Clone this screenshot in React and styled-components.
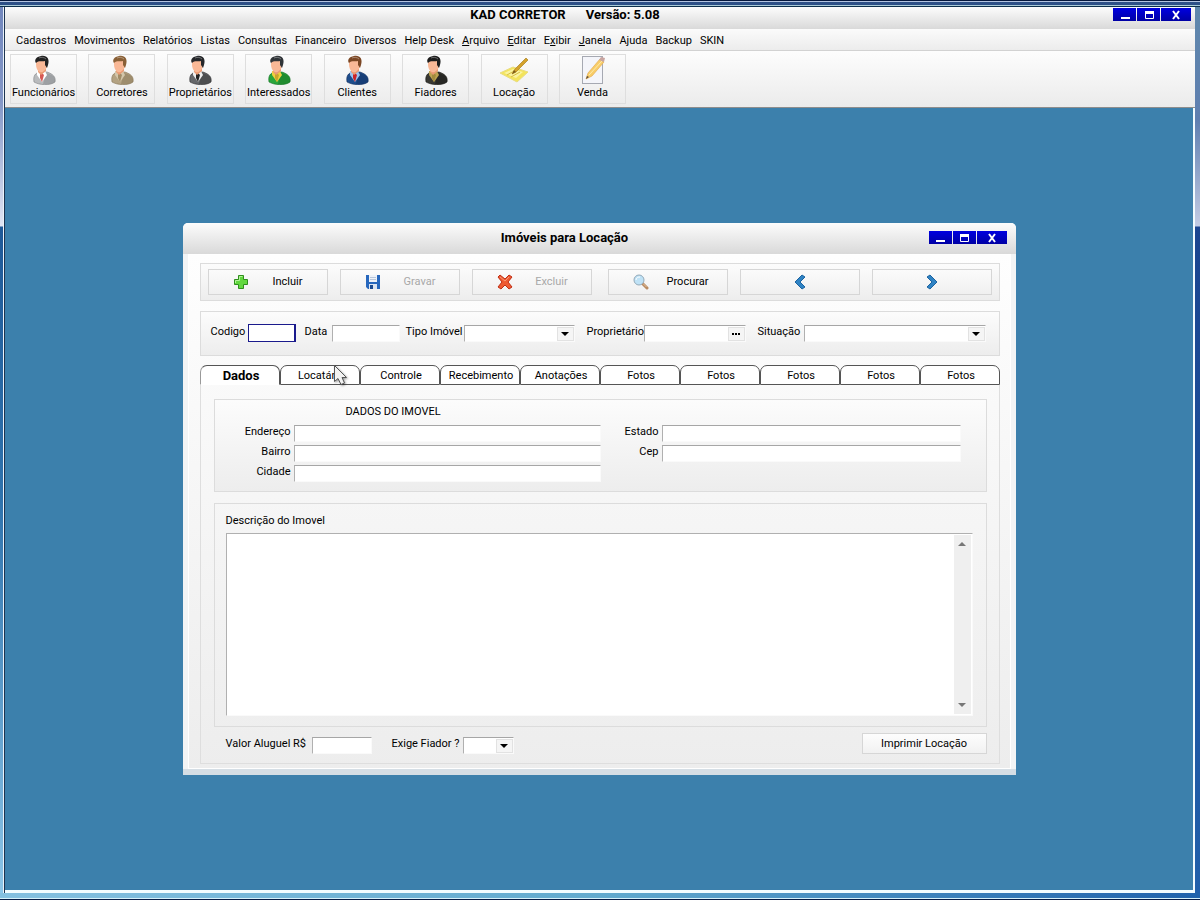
import React, { useState } from 'react'
import styled, { createGlobalStyle, css } from 'styled-components'

const menuItems = [
    { label: 'Cadastros' },
    { label: 'Movimentos' },
    { label: 'Relatórios' },
    { label: 'Listas' },
    { label: 'Consultas' },
    { label: 'Financeiro' },
    { label: 'Diversos' },
    { label: 'Help Desk' },
    { label: 'Arquivo', hot: 0 },
    { label: 'Editar', hot: 0 },
    { label: 'Exibir', hot: 1 },
    { label: 'Janela', hot: 0 },
    { label: 'Ajuda' },
    { label: 'Backup' },
    { label: 'SKIN' },
]

const tabs = ['Dados', 'Locatário', 'Controle', 'Recebimento', 'Anotações', 'Fotos', 'Fotos', 'Fotos', 'Fotos', 'Fotos']

const Person = ({ hair, coat, shade, shirt, tie }) => (
    <svg width="30" height="30" viewBox="0 0 30 30" aria-hidden="true">
        <path d="M5 27 C4 21 6 18 11 17 L18 17 C24 19 27 22 26 27 C21 31 10 30 5 27Z" fill={coat} stroke={shade} strokeWidth="0.6" />
        <path d="M17 18 C23 19 27 22 26 27 C22 30 18 29 14 29Z" fill={shade} opacity="0.45" />
        <path d="M8 16 L16 16 L18 20 L13 27 L8 20Z" fill={shirt} />
        <path d="M11 19 L13 18 L15 20 L13 27 L11 23Z" fill={tie} />
        <path d="M9 12 L17 12 L17 16 L12 20 L9 17Z" fill="#e99a72" />
        <path d="M7 6 C8 3 17 3 18 7 L18 12 C16 16 13 18 11 17 C8 16 7 12 7 9Z" fill="#f9b896" />
        <path d="M7 8 C5 5 7 2 12 1 C18 0 21 4 19 10 L18 13 L16 10 L16 6 C13 7 10 5 7 8Z" fill={hair} />
        <path d="M10 3 C12 2 15 2 17 4" stroke="#fff" fill="none" opacity="0.35" />
    </svg>
)

const NoteIcon = () => (
    <svg width="32" height="30" viewBox="0 0 32 30" aria-hidden="true">
        <path d="M2 18 L15 12 L30 17 L19 27Z" fill="#f3e45c" stroke="#e9dc80" />
        <path d="M6 18 L15 14 L25 17 L18 23Z" fill="#faf3a0" />
        <path d="M9 20 L16 16 M13 22 L22 17" stroke="#d6bf45" />
        <path d="M14 19 L17 14 L28 3 L30 5 L18 17Z" fill="#d5a22b" stroke="#a98324" strokeWidth="0.7" />
        <path d="M14 19 L16 15 L18 17Z" fill="#7b5c17" />
    </svg>
)

const PencilIcon = () => (
    <svg width="30" height="30" viewBox="0 0 30 30" aria-hidden="true">
        <rect x="5.5" y="1.5" width="20" height="27" fill="#f4f5fa" stroke="#a6a9b2" />
        <path d="M9 24 L11 18 L23 4 L27 7 L15 21Z" fill="#f8cd68" stroke="#e5ad55" strokeWidth="0.7" />
        <path d="M12 20 L25 6" stroke="#fdeab0" />
        <path d="M22 5 L24 2 L28 3 L27 7Z" fill="#c9a5a0" />
        <path d="M9 24 L10 21 L12 22Z" fill="#55483a" />
    </svg>
)

const shortcuts = [
    { label: 'Funcionários', icon: <Person hair="#222" coat="#b9bbbd" shade="#7d8083" shirt="#fff" tie="#d65a55" /> },
    { label: 'Corretores', icon: <Person hair="#8a6036" coat="#b3a282" shade="#857455" shirt="#d3c6aa" tie="#a18c67" /> },
    { label: 'Proprietários', icon: <Person hair="#25272a" coat="#66686b" shade="#2d2e31" shirt="#eee" tie="#222" /> },
    { label: 'Interessados', icon: <Person hair="#303438" coat="#2aa63b" shade="#136d22" shirt="#f0cf3d" tie="#c9a52a" /> },
    { label: 'Clientes', icon: <Person hair="#7b4724" coat="#1e4d8c" shade="#102d5c" shirt="#9cc4ee" tie="#c8242a" /> },
    { label: 'Fiadores', icon: <Person hair="#1d1d1d" coat="#383833" shade="#151512" shirt="#bda352" tie="#a28a3d" /> },
    { label: 'Locação', icon: <NoteIcon /> },
    { label: 'Venda', icon: <PencilIcon /> },
]

const PlusIcon = () => (
    <svg width="16" height="16" viewBox="0 0 16 16" aria-hidden="true">
        <path d="M5.5 1.5 H10.5 V5.5 H14.5 V10.5 H10.5 V14.5 H5.5 V10.5 H1.5 V5.5 H5.5Z" fill="#62d83f" stroke="#2f8f1d" />
        <path d="M9.5 2.5 H6.5 V6.5 H2.5 V9" stroke="#b3f39a" fill="none" />
    </svg>
)

const DiskIcon = () => (
    <svg width="16" height="16" viewBox="0 0 16 16" aria-hidden="true">
        <path d="M1 1 H15 V15 H3 L1 13Z" fill="#2767bd" />
        <rect x="4" y="1" width="8" height="7" fill="#eef2f8" />
        <path d="M5 3.5 H11 M5 5.5 H11" stroke="#b8c6da" />
        <rect x="4" y="10" width="8" height="5" fill="#dbe4f1" />
        <rect x="5" y="11" width="3" height="4" fill="#1b4a90" />
    </svg>
)

const CrossIcon = () => (
    <svg width="16" height="16" viewBox="0 0 16 16" aria-hidden="true">
        <path d="M3 1 L8 5 L12 1 L15 3 L11 8 L15 13 L12 15 L8 11 L4 15 L1 13 L5 8 L1 3Z" fill="#ee5a32" stroke="#bf2e14" />
        <path d="M3 3 L8 7 L12 3" stroke="#f89a77" fill="none" />
    </svg>
)

const SearchIcon = () => (
    <svg width="16" height="16" viewBox="0 0 16 16" aria-hidden="true">
        <path d="M9 9 L14 14" stroke="#b98b62" strokeWidth="3" strokeLinecap="round" />
        <path d="M10 9.5 L13.5 13" stroke="#e3c29f" />
        <circle cx="6" cy="6" r="5" fill="#bfe2f6" stroke="#93a9b8" />
        <path d="M3 6 C3 4 5 3 7 3" stroke="#fff" fill="none" />
    </svg>
)

const Chevron = ({ right }) => (
    <svg width="16" height="16" viewBox="0 0 16 16" aria-hidden="true">
        <path
            d={right ? 'M3 3 L6 1 L13 8 L6 15 L3 13 L8 8Z' : 'M13 3 L10 1 L3 8 L10 15 L13 13 L8 8Z'}
            fill="#2f83c4"
            stroke="#1c63a0"
        />
    </svg>
)

const Arrow = ({ up, color = '#000' }) => (
    <svg width="8" height="4" viewBox="0 0 8 4" aria-hidden="true">
        <path d={up ? 'M4 0 L8 4 H0Z' : 'M0 0 H8 L4 4Z'} fill={color} />
    </svg>
)

const Controls = () => (
    <ControlGroup>
        <ControlButton aria-label="Minimizar">
            <svg width="12" height="11" viewBox="0 0 12 11"><path d="M2 9 H11" stroke="#fff" strokeWidth="2" /></svg>
        </ControlButton>
        <ControlButton aria-label="Maximizar">
            <svg width="12" height="11" viewBox="0 0 12 11">
                <path d="M2.5 2.5 H10.5 V9.5 H2.5Z" stroke="#fff" fill="none" />
                <path d="M2 3 H11 M2 4 H11" stroke="#fff" strokeWidth="2" />
            </svg>
        </ControlButton>
        <ControlButton $wide aria-label="Fechar">
            <svg width="12" height="11" viewBox="0 0 12 11"><path d="M3 2 L9 10 M9 2 L3 10" stroke="#fff" strokeWidth="2" /></svg>
        </ControlButton>
    </ControlGroup>
)

const Combo = ({ id, width }) => (
    <ComboBox $width={width}>
        <ComboSelect id={id} defaultValue="">
            <option value=""></option>
        </ComboSelect>
        <ComboArrow><Arrow /></ComboArrow>
    </ComboBox>
)

const App = () => {
    const [active, setActive] = useState(0)

    const hotLabel = ({ label, hot }) => {
        if (hot === undefined) return label
        return <>{label.slice(0, hot)}<u>{label[hot]}</u>{label.slice(hot + 1)}</>
    }

    return (
        <Frame>
            <GlobalStyle />
            <MainTitleBar>
                <Title>
                    <span>KAD CORRETOR</span>
                    <span>Versão: 5.08</span>
                </Title>
                <Controls />
            </MainTitleBar>
            <MenuBar>
                {menuItems.map((item) => (
                    <MenuButton key={item.label}>{hotLabel(item)}</MenuButton>
                ))}
            </MenuBar>
            <ShortcutBar>
                <ShortcutList>
                    {shortcuts.map((item) => (
                        <Shortcut key={item.label}>
                            {item.icon}
                            <span>{item.label}</span>
                        </Shortcut>
                    ))}
                </ShortcutList>
            </ShortcutBar>
            <Desktop>
                <Window>
                    <WindowTitleBar>
                        <Title>Imóveis para Locação</Title>
                        <Controls />
                    </WindowTitleBar>
                    <WindowBody>
                        <ActionPanel>
                            <ActionGroup>
                                <ActionButton><PlusIcon /><span>Incluir</span></ActionButton>
                                <ActionButton disabled><DiskIcon /><span>Gravar</span></ActionButton>
                                <ActionButton disabled><CrossIcon /><span>Excluir</span></ActionButton>
                            </ActionGroup>
                            <ActionGroup>
                                <ActionButton><SearchIcon /><span>Procurar</span></ActionButton>
                                <ActionButton $single aria-label="Anterior"><Chevron /></ActionButton>
                                <ActionButton $single aria-label="Próximo"><Chevron right /></ActionButton>
                            </ActionGroup>
                        </ActionPanel>

                        <FilterPanel>
                            <Field $label={37}>
                                <Label htmlFor="codigo">Codigo</Label>
                                <FocusedInput id="codigo" />
                            </Field>
                            <Field $label={27}>
                                <Label htmlFor="data">Data</Label>
                                <Input id="data" $width={68} />
                            </Field>
                            <Field $label={58}>
                                <Label htmlFor="tipo">Tipo Imóvel</Label>
                                <Combo id="tipo" width={111} />
                            </Field>
                            <Field $label={57}>
                                <Label htmlFor="proprietario">Proprietário</Label>
                                <Lookup>
                                    <LookupInput id="proprietario" />
                                    <LookupButton aria-label="Localizar proprietário">
                                        <svg width="8" height="2" viewBox="0 0 8 2"><path d="M0 0h2v2H0zM3 0h2v2H3zM6 0h2v2H6z" /></svg>
                                    </LookupButton>
                                </Lookup>
                            </Field>
                            <Field $label={46}>
                                <Label htmlFor="situacao">Situação</Label>
                                <Combo id="situacao" />
                            </Field>
                        </FilterPanel>

                        <TabList role="tablist">
                            {tabs.map((tab, i) => (
                                <Tab key={i} role="tab" aria-selected={active === i} $active={active === i} onClick={() => setActive(i)}>
                                    {tab}
                                </Tab>
                            ))}
                            <Pointer width="14" height="21" viewBox="0 0 14 21" aria-hidden="true">
                                <path d="M0.5 0.5 V16.5 L4 13.5 L7 19.5 L10.5 18 L8 12.5 H12.5Z" fill="#f2f2f2" stroke="#555" />
                            </Pointer>
                        </TabList>
                        <TabPanel role="tabpanel">
                            <AddressGroup>
                                <GroupTitle>DADOS DO IMOVEL</GroupTitle>
                                <AddressGrid>
                                    <Label htmlFor="endereco">Endereço</Label>
                                    <Input id="endereco" />
                                    <Label htmlFor="estado">Estado</Label>
                                    <Input id="estado" />
                                    <Label htmlFor="bairro">Bairro</Label>
                                    <Input id="bairro" />
                                    <Label htmlFor="cep">Cep</Label>
                                    <Input id="cep" />
                                    <Label htmlFor="cidade">Cidade</Label>
                                    <Input id="cidade" />
                                </AddressGrid>
                            </AddressGroup>
                            <DescriptionGroup>
                                <Label htmlFor="descricao">Descrição do Imovel</Label>
                                <Memo>
                                    <MemoText id="descricao" />
                                    <MemoScroll>
                                        <ScrollButton aria-label="Rolar para cima"><Arrow up color="#777" /></ScrollButton>
                                        <ScrollButton aria-label="Rolar para baixo"><Arrow color="#777" /></ScrollButton>
                                    </MemoScroll>
                                </Memo>
                            </DescriptionGroup>
                            <FooterRow>
                                <Field $label={86}>
                                    <Label htmlFor="valor">Valor Aluguel R$</Label>
                                    <Input id="valor" $width={60} />
                                </Field>
                                <Field $label={71}>
                                    <Label htmlFor="fiador">Exige Fiador ?</Label>
                                    <Combo id="fiador" width={51} />
                                </Field>
                                <PrintButton>Imprimir Locação</PrintButton>
                            </FooterRow>
                        </TabPanel>
                    </WindowBody>
                </Window>
            </Desktop>
        </Frame>
    )
}

export default App

const GlobalStyle = createGlobalStyle`
    *{
        box-sizing: border-box;
    }
    body{
        margin: 0;
    }
    body, button, input, select, textarea{
        font-family: Roboto, "Liberation Sans", sans-serif;
        font-size: 11px;
        line-height: 16px;
        color: #000;
    }
    button{
        padding: 0;
        border: 0;
        background: none;
    }
    svg{
        display: block;
        flex-shrink: 0;
    }
`
const Frame = styled.div`
    min-height: 100vh;
    display: flex;
    flex-direction: column;
    padding: 7px 5px 7px 5px;
    background:
        linear-gradient(#06183c 0 1px, #b4c4e0 1px 2px, #2d5087 2px 5px, #a9cbd8 5px 6px, #0d2f4d 6px) top / 100% 7px no-repeat,
        linear-gradient(transparent 0 5px, #d6f1fa 5px 6px, #071c45 6px) bottom / 100% 7px no-repeat,
        linear-gradient(90deg, #84c0e0, #62aace 50%, #1f62ac) bottom / 100% 7px no-repeat,
        linear-gradient(90deg, transparent 0 3px, #eaf2fa 3px 4px, #1c3350 4px) left / 5px 100% no-repeat,
        linear-gradient(#7186bd 0, #8296c6 100px, #dfe4f3 226px, #1f5998 227px, #2f73ad 500px, #8dc6e8) left / 5px 100% no-repeat,
        linear-gradient(#5f88ac 0, #5f7fb0 120px, #c3cce4 226px, #1b4590 227px, #2160ab) right / 5px 100% no-repeat;
`
const titleBar = css`
    display: flex;
    background: linear-gradient(#fcfcfc, #d9d9d9);
`
const MainTitleBar = styled.header`
    ${titleBar}
    height: 22px;
    padding: 1px 4px 0 12px;
`
const Title = styled.h1`
    flex: 1;
    display: flex;
    justify-content: center;
    gap: 20px;
    margin: 0;
    font-size: 13px;
    line-height: 14px;
    font-weight: 700;
`
const ControlGroup = styled.div`
    display: flex;
    gap: 1px;
`
const ControlButton = styled.button`
    width: ${(props) => (props.$wide ? 30 : 23)}px;
    height: 13px;
    display: flex;
    align-items: center;
    justify-content: center;
    background: linear-gradient(#0000e0, #0000a4);
`
const MenuBar = styled.nav`
    display: flex;
    gap: 8px;
    padding: 4px 11px 1px;
    border-bottom: 1px solid #d2d2d2;
    background: linear-gradient(#fbfbfb, #ececec);
`
const MenuButton = styled.button`
    white-space: nowrap;
`
const ShortcutBar = styled.div`
    padding: 3px 5px;
    border-bottom: 1px solid #8d8d8d;
    background: linear-gradient(#fdfdfd, #ebebeb);
`
const ShortcutList = styled.div`
    display: flex;
    justify-content: space-between;
    max-width: 616px;
`
const Shortcut = styled.button`
    width: 67px;
    height: 50px;
    display: flex;
    flex-direction: column;
    align-items: center;
    border: 1px solid #dedede;
    white-space: nowrap;
`
const Desktop = styled.main`
    flex: 1;
    padding: 115px 0 40px;
    border: solid #f2fcff;
    border-width: 0 2px 3px 0;
    background: #3c80ac;
`
const Window = styled.section`
    width: 70%;
    min-width: 833px;
    margin: 0 auto;
    border-radius: 5px 5px 0 0;
    border-bottom: 6px solid #d5dee5;
    background: #f2f4f5;
    overflow: hidden;
`
const WindowTitleBar = styled.header`
    ${titleBar}
    height: 31px;
    padding: 8px 9px 0 18px;
`
const WindowBody = styled.div`
    margin: 0 5px;
    padding: 8px 10px 4px 11px;
    border: 1px solid #fff;
    background: linear-gradient(#fefefe, #ededed);
`
const panel = css`
    border: 1px solid #dcdcdc;
    background: linear-gradient(#fcfcfc, #ededed);
`
const ActionPanel = styled.div`
    ${panel}
    display: flex;
    gap: 16px;
    padding: 5px 7px;
`
const ActionGroup = styled.div`
    flex: 1;
    display: grid;
    grid-template-columns: repeat(3, 1fr);
    gap: 12px;
`
const ActionButton = styled.button`
    height: 26px;
    display: flex;
    align-items: center;
    justify-content: ${(props) => (props.$single ? 'center' : 'flex-start')};
    padding-left: ${(props) => (props.$single ? 0 : 24)}px;
    border: 1px solid #d6d6d6;
    background: linear-gradient(#fbfbfb, #f0f0f0);
    span{
        flex: 1;
    }
    &:disabled{
        color: #a8a8a8;
    }
`
const FilterPanel = styled.div`
    ${panel}
    display: grid;
    grid-template-columns: 94px 101px 181px 171px 1fr;
    margin: 10px 0 9px;
    padding: 12px 13px 13px 10px;
`
const Field = styled.div`
    display: grid;
    grid-template-columns: ${(props) => props.$label}px 1fr;
    align-items: start;
`
const Label = styled.label`
    white-space: nowrap;
`
const sunken = css`
    height: 17px;
    border: 1px solid #b0b0b0;
    border-color: #a6a6a6 #fafafa #fafafa #b0b0b0;
    background: #fff;
`
const Input = styled.input`
    ${sunken}
    width: ${(props) => (props.$width ? props.$width + 'px' : '100%')};
    margin-top: 1px;
    padding: 0 2px;
    outline: none;
`
const FocusedInput = styled(Input)`
    width: 48px;
    height: 18px;
    margin-top: 0;
    border: 1px solid #1a1a8c;
    border-right-width: 2px;
`
const ComboBox = styled.div`
    ${sunken}
    position: relative;
    width: ${(props) => (props.$width ? props.$width + 'px' : '100%')};
    margin-top: 1px;
`
const ComboSelect = styled.select`
    appearance: none;
    display: block;
    width: 100%;
    height: 15px;
    padding: 0 18px 0 2px;
    border: 0;
    background: none;
    outline: none;
`
const ComboArrow = styled.span`
    position: absolute;
    top: 1px;
    right: 0;
    width: 17px;
    height: 14px;
    display: flex;
    align-items: center;
    justify-content: center;
    border: 1px solid #e2e2e2;
    background: #f5f5f5;
    pointer-events: none; // clicks go through to the select
`
const Lookup = styled.div`
    ${sunken}
    display: flex;
    width: 102px;
    margin-top: 1px;
`
const LookupInput = styled.input`
    flex: 1;
    min-width: 0;
    padding: 0 2px;
    border: 0;
    background: none;
    outline: none;
`
const LookupButton = styled.button`
    width: 17px;
    height: 14px;
    margin-top: 1px;
    display: flex;
    align-items: center;
    justify-content: center;
    border: 1px solid #e2e2e2;
    background: #f5f5f5;
`
const TabList = styled.div`
    position: relative;
    display: flex;
`
const Tab = styled.button`
    flex: 1;
    height: 20px;
    padding: 2px 0 0 3px;
    border: 1px solid #555;
    border-left-color: ${(props) => (props.$active ? '#999' : '#555')};
    border-bottom-color: ${(props) => (props.$active ? '#fff' : '#555')};
    border-radius: 7px 7px 0 0;
    background: #fff;
    font-size: ${(props) => (props.$active ? 13 : 11)}px;
    font-weight: ${(props) => (props.$active ? 700 : 400)};
    white-space: nowrap;
`
// mouse pointer resting on the second tab
const Pointer = styled.svg`
    position: absolute;
    left: 134px;
    top: 0;
    filter: drop-shadow(1px 1px 1px rgba(0,0,0,.4));
    pointer-events: none;
`
const TabPanel = styled.div`
    padding: 14px 12px 9px 13px;
    border: 1px solid #dedede;
    border-top: 0;
`
const AddressGroup = styled.div`
    ${panel}
    height: 93px;
    padding: 4px 25px 0 0;
`
const GroupTitle = styled.h2`
    margin: 0 0 4px 131px;
    font-size: 11px;
    line-height: 16px;
    font-weight: 400;
`
const AddressGrid = styled.div`
    display: grid;
    grid-template-columns: 76px 307fr 55px 299fr;
    gap: 0 3px;
    grid-auto-rows: 20px;
    text-align: right;
`
const DescriptionGroup = styled.div`
    margin-top: 11px;
    padding: 9px 13px 10px 11px;
    border: 1px solid #dcdcdc;
`
const Memo = styled.div`
    display: flex;
    height: 183px;
    margin-top: 4px;
    border: 1px solid #b0b0b0;
    border-color: #b0b0b0 #fafafa #fafafa #b0b0b0;
    background: #fff;
`
const MemoText = styled.textarea`
    flex: 1;
    resize: none;
    border: 0;
    background: none;
    outline: none;
`
const MemoScroll = styled.div`
    width: 17px;
    margin: 1px;
    display: flex;
    flex-direction: column;
    justify-content: space-between;
    background: #efefef;
`
const ScrollButton = styled.button`
    height: 18px;
    display: flex;
    align-items: center;
    justify-content: center;
`
const FooterRow = styled.div`
    display: flex;
    gap: 20px;
    padding: 6px 0 0 12px;
    ${Field}{
        padding-top: 3px;
    }
`
const PrintButton = styled.button`
    width: 125px;
    height: 21px;
    margin-left: auto;
    border: 1px solid #d6d6d6;
    background: linear-gradient(#fdfdfd, #f1f1f1);
`
